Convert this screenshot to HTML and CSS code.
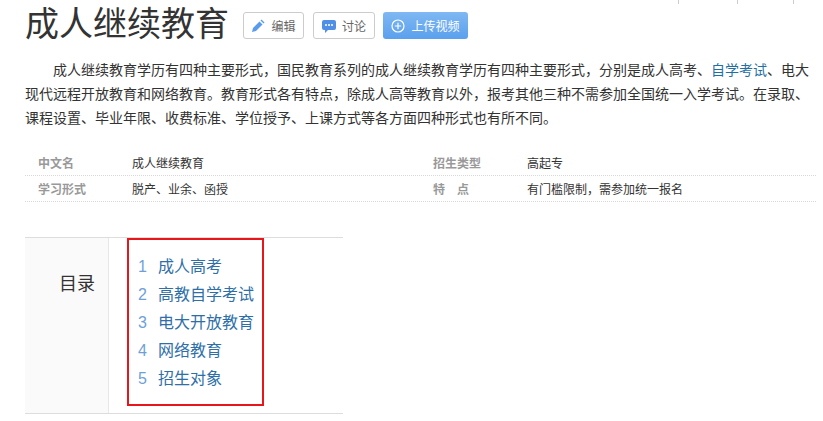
FILE: index.html
```html
<!DOCTYPE html>
<html lang="zh-CN">
<head>
    <meta charset="UTF-8">
    <title>成人继续教育</title>
    <link rel="stylesheet" href="styles.css">
</head>
<body>
    <div class="top-ticks">
        <i></i><i></i><i></i>
    </div>
    <div class="title-row">
        <h1>成人继续教育</h1>
        <a class="btn btn-edit">
            <svg width="14" height="14" viewBox="0 0 14 14"><path d="M1 13l1-4 6.500-6.500 3 3L5 12z" fill="#5b9bea"/><path d="M9.500 1.500l1-1 3 3-1 1z" fill="#5b9bea"/></svg>
            编辑
        </a>
        <a class="btn btn-talk">
            <svg width="14" height="14" viewBox="0 0 14 14"><path d="M2 1h10a2 2 0 0 1 2 2v6a2 2 0 0 1-2 2H6l-3 3v-3H2a2 2 0 0 1-2-2V3a2 2 0 0 1 2-2z" fill="#4f8fe6"/><circle cx="4" cy="6" r="1" fill="#fff"/><circle cx="7" cy="6" r="1" fill="#fff"/><circle cx="10" cy="6" r="1" fill="#fff"/></svg>
            讨论
        </a>
        <a class="btn btn-upload">
            <svg width="14" height="14" viewBox="0 0 14 14" fill="none" stroke="#fff" stroke-width="1.200"><circle cx="7" cy="7" r="6"/><path d="M7 3.800v6.400M3.800 7h6.400"/></svg>
            上传视频
        </a>
    </div>

    <p class="summary">成人继续教育学历有四种主要形式，国民教育系列的成人继续教育学历有四种主要形式，分别是成人高考、<a href="#">自学考试</a>、电大现代远程开放教育和网络教育。教育形式各有特点，除成人高等教育以外，报考其他三种不需参加全国统一入学考试。在录取、课程设置、毕业年限、收费标准、学位授予、上课方式等各方面四种形式也有所不同。</p>

    <div class="info">
        <div class="info-row">
            <span class="info-name">中文名</span><span class="info-value">成人继续教育</span>
            <span class="info-name">招生类型</span><span class="info-value">高起专</span>
        </div>
        <div class="info-row">
            <span class="info-name">学习形式</span><span class="info-value">脱产、业余、函授</span>
            <span class="info-name">特　点</span><span class="info-value">有门槛限制，需参加统一报名</span>
        </div>
    </div>

    <div class="catalog">
        <div class="catalog-head">目录</div>
        <ol class="catalog-list">
            <li><span>1</span><a href="#">成人高考</a></li>
            <li><span>2</span><a href="#">高教自学考试</a></li>
            <li><span>3</span><a href="#">电大开放教育</a></li>
            <li><span>4</span><a href="#">网络教育</a></li>
            <li><span>5</span><a href="#">招生对象</a></li>
        </ol>
    </div>
</body>
</html>
```

FILE: styles.css
```css
body {
    margin: 0;
    padding: 0 7px 0 25px;
    background-color: #fff;
    font-family: "Liberation Sans", "Noto Sans CJK SC", sans-serif;
    color: #333;
}
a {
    text-decoration: none;
}
.top-ticks {
    display: flex;
    justify-content: flex-end;
    height: 4px;
    padding-right: 22px;
}
.top-ticks i {
    width: 1px;
    margin-left: 55px;
    background-color: #ccc;
}
.top-ticks i:nth-child(2) {
    margin-left: 58px;
}
.title-row {
    display: flex;
    align-items: center;
    height: 43px;
}
h1 {
    margin: 0 14px 3px 0;
    font-size: 34px;
    font-weight: 400;
    line-height: 40px;
    color: #333;
}
.btn {
    display: flex;
    align-items: center;
    justify-content: center;
    gap: 6px;
    box-sizing: border-box;
    height: 27px;
    margin-right: 9px;
    border: 1px solid #ccc;
    border-radius: 3px;
    font-size: 12px;
    color: #666;
}
.btn-edit {
    width: 61px;
}
.btn-talk {
    width: 62px;
}
.btn-upload {
    width: 85px;
    margin-left: -1px;
    border: 0;
    color: #fff;
    background: linear-gradient(#7fb8f2, #5aa0ee);
}
.summary {
    width: 791px;
    margin: 11px 0 0;
    font-size: 14px;
    line-height: 24px;
    text-indent: 28px;
    color: #333;
}
.summary a {
    color: #1f6fa5;
}
.info {
    margin-top: 20px;
}
.info-row {
    display: grid;
    grid-template-columns: 107px 301px 94px 1fr;
    height: 25px;
    border-bottom: 1px dotted #d8d8d8;
    font-size: 12px;
    line-height: 28px;
    color: #333;
}
.info-name {
    padding-left: 13px;
    font-weight: 700;
    color: #999;
}
.info-name:nth-child(3) {
    padding-left: 0;
}
.catalog {
    display: flex;
    align-items: flex-start;
    box-sizing: border-box;
    width: 318px;
    height: 177px;
    margin-top: 35px;
    border-top: 1px solid #ddd;
    border-bottom: 1px solid #ddd;
}
.catalog-head {
    box-sizing: border-box;
    width: 84px;
    height: 175px;
    padding: 33px 13px 0 0;
    border-right: 1px solid #e8e8e8;
    background-color: #fafafa;
    font-size: 18px;
    line-height: 26px;
    text-align: right;
}
.catalog-list {
    box-sizing: border-box;
    width: 137px;
    height: 168px;
    margin: 0 0 0 18px;
    padding: 13px 0 0 9px;
    border: 2px solid #e8151b;
    list-style: none;
    font-size: 16px;
    line-height: 28px;
    white-space: nowrap;
}
.catalog-list li {
    display: flex;
}
.catalog-list span {
    width: 20px;
    color: #6f9fd8;
}
.catalog-list a {
    color: #2f6fa8;
}
```
